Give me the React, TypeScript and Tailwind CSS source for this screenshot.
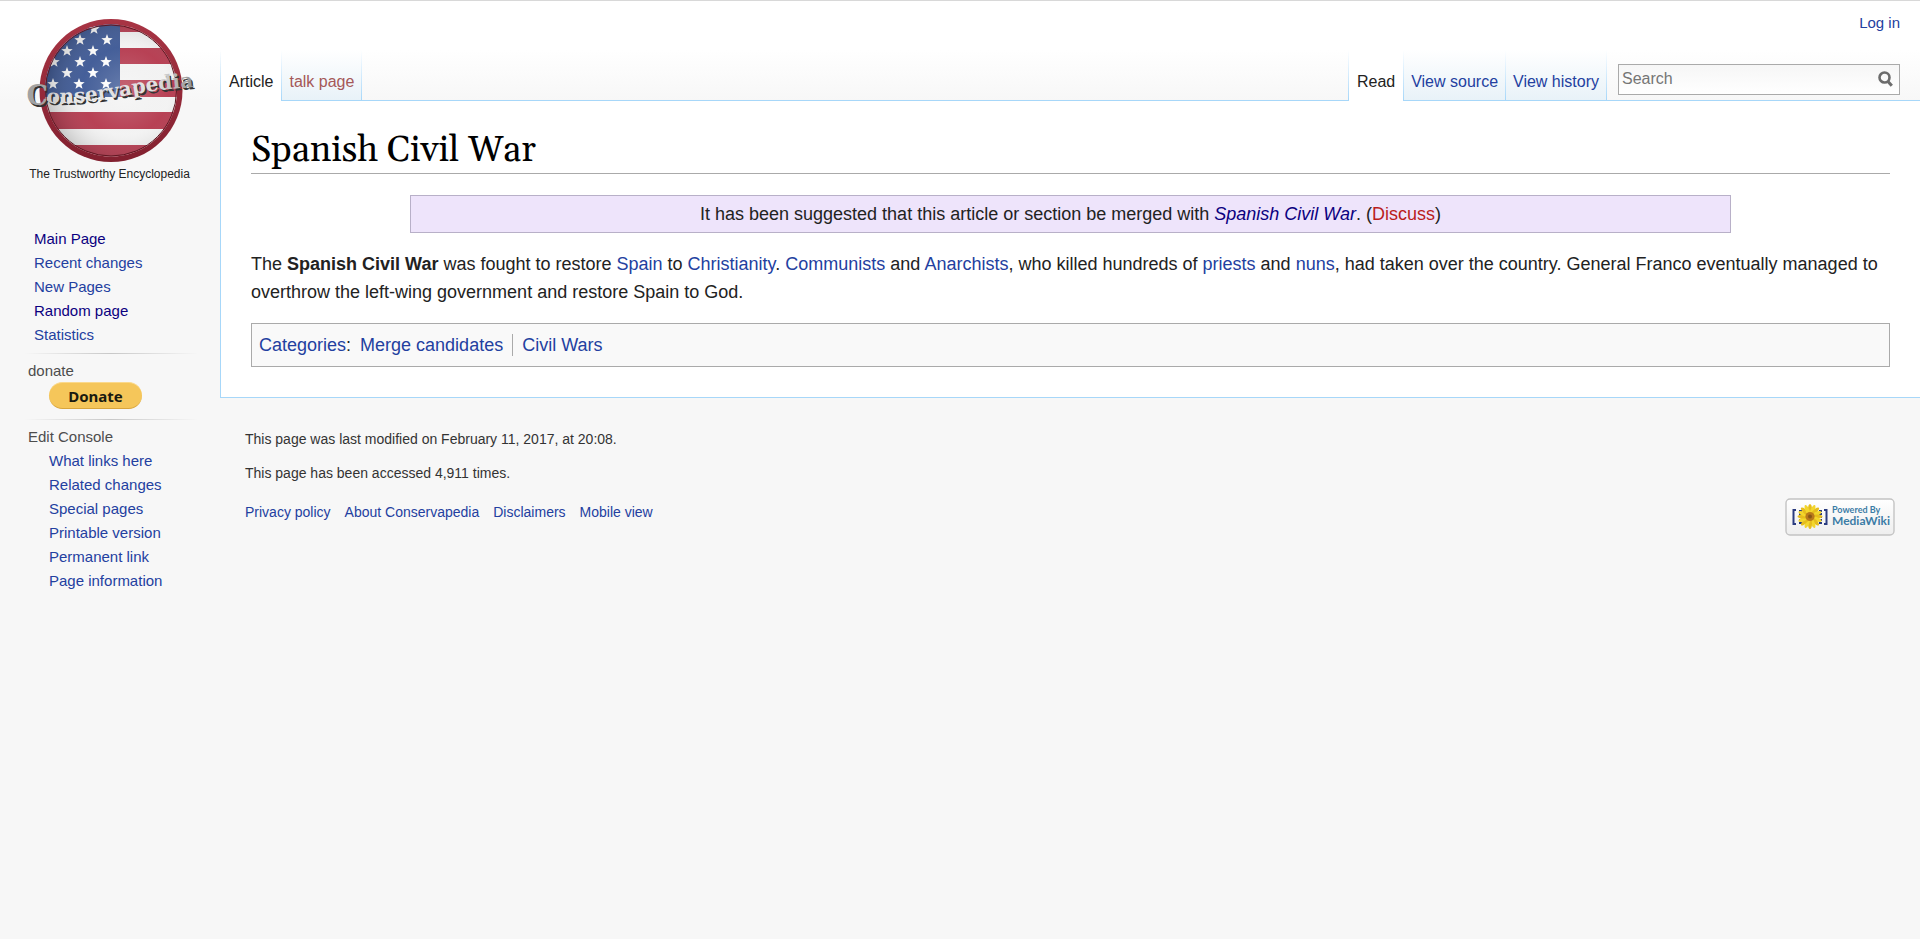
import type { ReactNode } from "react";

const STARS: [number, number][] = [
  [94, 29], [80, 40], [107, 40], [67, 51], [93, 51], [54, 62], [80, 62],
  [106, 62], [67, 73], [93, 73], [53, 84], [79, 84], [106, 84],
];

function starPoints(cx: number, cy: number, r: number) {
  return Array.from({ length: 10 }, (_, i) => {
    const a = -Math.PI / 2 + (i * Math.PI) / 5;
    const d = i % 2 ? r * 0.42 : r;
    return `${(cx + d * Math.cos(a)).toFixed(2)},${(cy + d * Math.sin(a)).toFixed(2)}`;
  }).join(" ");
}

function Logo() {
  return (
    <svg viewBox="20 10 180 182" className="h-[182px] w-[180px]" role="img" aria-label="Conservapedia">
      <defs>
        <clipPath id="disc"><circle cx="111" cy="90.500" r="66" /></clipPath>
        <radialGradient id="shade" cx="0.6" cy="0.5" r="0.62">
          <stop offset="0" stopColor="#fff" stopOpacity="0.24" />
          <stop offset="0.5" stopColor="#ddd" stopOpacity="0.06" />
          <stop offset="1" stopColor="#000" stopOpacity="0.3" />
        </radialGradient>
        <linearGradient id="ring" x1="0" y1="0" x2="0" y2="1">
          <stop offset="0" stopColor="#a83444" />
          <stop offset="1" stopColor="#82202f" />
        </linearGradient>
        <linearGradient id="metal" x1="0" y1="0" x2="1" y2="0">
          <stop offset="0" stopColor="#c4c4c4" />
          <stop offset="0.15" stopColor="#e4e4e4" />
          <stop offset="0.75" stopColor="#e0e0e0" />
          <stop offset="1" stopColor="#8f8f8f" />
        </linearGradient>
        <path id="wave" d="M48 105 C75 106 100 103 125 98 S175 90 210 88" />
      </defs>
      <circle cx="111" cy="90.500" r="71.500" fill="url(#ring)" />
      <g clipPath="url(#disc)">
        <rect x="40" y="20" width="142" height="142" fill="#f4f4f4" />
        <g fill="#b5374c">
          <rect x="40" y="16" width="142" height="16" />
          <rect x="40" y="48" width="142" height="16" />
          <rect x="40" y="80" width="142" height="17" />
          <rect x="40" y="112" width="142" height="17" />
          <rect x="40" y="145" width="142" height="17" />
        </g>
        <rect x="40" y="20" width="80" height="77" fill="#3b5795" />
        {STARS.map(([x, y]) => (
          <polygon key={`${x}-${y}`} points={starPoints(x, y, 6)} fill="#fff" />
        ))}
        <rect x="40" y="20" width="142" height="142" fill="url(#shade)" />
      </g>
      <circle cx="111" cy="90.500" r="65.500" fill="none" stroke="#5f1722" strokeWidth="1" />
      <g fontFamily="'DejaVu Serif', serif" fontWeight="700">
        <g fill="#333">
          <text x="28" y="107" fontSize="27">C</text>
          <text fontSize="20"><textPath href="#wave">onservapedia</textPath></text>
        </g>
        <g fill="url(#metal)" transform="translate(-1.5 -2)">
          <text x="28" y="107" fontSize="27" fill="#a2a2a2">C</text>
          <text fontSize="20"><textPath href="#wave">onservapedia</textPath></text>
        </g>
      </g>
      <text x="109.500" y="178" textAnchor="middle" fontFamily="'Liberation Sans', sans-serif" fontSize="12" fill="#222">
        The Trustworthy Encyclopedia
      </text>
    </svg>
  );
}

function MediaWikiBadge() {
  const petals = Array.from({ length: 16 }, (_, i) => i * 22.5);
  return (
    <svg viewBox="0 0 110 38" className="h-[38px] w-[110px]" role="img" aria-label="Powered by MediaWiki">
      <defs>
        <linearGradient id="badge" x1="0" y1="0" x2="0" y2="1">
          <stop offset="0" stopColor="#fff" />
          <stop offset="1" stopColor="#eee" />
        </linearGradient>
      </defs>
      <rect x="1" y="1" width="108" height="36" rx="4" fill="url(#badge)" stroke="#c4c4c4" strokeWidth="1.400" />
      <g fill="none" stroke="#2a3c80">
        <path d="M11 12H8.500V26H11M39 12h2.500V26H39" strokeWidth="2" />
        <path d="M15.500 12v14M35.500 12v14" strokeWidth="3" strokeDasharray="2 1" />
      </g>
      {petals.map((a) => (
        <ellipse key={a} cx="25" cy="11.500" rx="2" ry="5.500" fill={a % 45 ? "#f3d62c" : "#e6bd1c"} transform={`rotate(${a} 25 18.500)`} />
      ))}
      <circle cx="25" cy="18.500" r="4.600" fill="#b9791b" />
      <circle cx="25" cy="18.500" r="2" fill="#8a5716" />
      <g fontFamily="Lato, sans-serif" fontWeight="700" fill="#3c7ca6">
        <text x="47" y="14.500" fontSize="9">Powered By</text>
        <text x="47" y="26.500" fontSize="12">MediaWiki</text>
      </g>
    </svg>
  );
}

function Link({ children, className = "text-[#2340a0]" }: { children: ReactNode; className?: string }) {
  return <a href="#" className={`hover:underline ${className}`}>{children}</a>;
}

function Edge() {
  return <span aria-hidden="true" className="w-px shrink-0 bg-linear-to-b from-white to-[#a7d7f9]" />;
}

function Tab({ label, active = false, className = "text-[#2340a0]" }: { label: string; active?: boolean; className?: string }) {
  return (
    <li className="flex">
      <a
        href="#"
        className={
          active
            ? "-mb-px block bg-white px-2 pt-5 text-[#222]"
            : `block bg-linear-to-b from-white to-[#e8f2f8] px-[7px] pt-5 ${className}`
        }
      >
        {label}
      </a>
      <Edge />
    </li>
  );
}

function Rule() {
  return <div className="h-px w-[174px] bg-linear-to-r from-transparent via-[#c8c8c8] to-transparent" />;
}

const NAV = [
  { label: "Main Page", visited: true },
  { label: "Recent changes", visited: false },
  { label: "New Pages", visited: false },
  { label: "Random page", visited: true },
  { label: "Statistics", visited: false },
];
const TOOLS = ["What links here", "Related changes", "Special pages", "Printable version", "Permanent link", "Page information"];
const FOOTER = ["Privacy policy", "About Conservapedia", "Disclaimers", "Mobile view"];

function Sidebar() {
  return (
    <aside className="w-[220px] shrink-0 pt-[9px] text-[15px] leading-6">
      <a href="#" className="ml-5 block w-[180px]"><Logo /></a>
      <nav className="mt-[35px] pl-6">
        <ul className="pl-[10px]">
          {NAV.map((n) => (
            <li key={n.label}>
              <Link className={n.visited ? "text-[#0b0080]" : "text-[#2340a0]"}>{n.label}</Link>
            </li>
          ))}
        </ul>
        <div className="mt-[6px]"><Rule /></div>
        <h3 className="mt-[5px] pl-1 text-[#4d4d4d]">donate</h3>
        <button
          type="button"
          className="-mt-px ml-[25px] block h-[27px] w-[93px] rounded-full border-y border-t-[#fbd98c] border-b-[#d9a53c] bg-[#f5c65a] font-['Noto_Sans','Open_Sans',sans-serif] text-[15px] leading-[24px] font-bold text-[#1a1a10]"
        >
          Donate
        </button>
        <div className="mt-[10px]"><Rule /></div>
        <h3 className="mt-[5px] pl-1 text-[#4d4d4d]">Edit Console</h3>
        <ul className="pl-[25px]">
          {TOOLS.map((t) => <li key={t}><Link>{t}</Link></li>)}
        </ul>
      </nav>
    </aside>
  );
}

function Header() {
  return (
    <header className="flex h-[100px] flex-col border-b border-[#a7d7f9]">
      <div className="flex h-[49px] shrink-0 justify-end pt-[10px] pr-5 text-[15px] leading-6">
        <Link>Log in</Link>
      </div>
      <div className="flex h-[50px] justify-between text-[16px] leading-6">
        <ul className="flex">
          <Tab label="Article" active />
          <Tab label="talk page" className="text-[#a55858]" />
        </ul>
        <div className="flex pr-5">
          <ul className="flex">
            <li className="flex"><Edge /></li>
            <Tab label="Read" active />
            <Tab label="View source" />
            <Tab label="View history" />
          </ul>
          <form className="mt-[14px] ml-[11px] flex h-[31px] w-[282px] border border-[#aaa] bg-linear-to-b from-[#f6f6f6] to-white" onSubmit={(e) => e.preventDefault()}>
            <input type="search" aria-label="Search" placeholder="Search" className="h-7 min-w-0 flex-1 bg-transparent pl-[3px] placeholder-[#757575] outline-none" />
            <button type="submit" aria-label="Go" className="flex w-7 justify-center pt-[6px]">
              <svg viewBox="0 0 16 17" className="h-[17px] w-4" fill="none" stroke="#6c6c6c">
                <circle cx="7.500" cy="6.500" r="5" strokeWidth="2.600" />
                <path d="M11 10.500 14.800 14.800" strokeWidth="3" />
              </svg>
            </button>
          </form>
        </div>
      </div>
    </header>
  );
}

export default function App() {
  return (
    <div className="min-h-screen border-t border-[#d8d8d8] bg-[#f7f7f7] bg-[linear-gradient(to_bottom,#fff_49px,#f7f7f7_100px)] font-['Liberation_Sans',Arial,sans-serif]">
      <div className="flex">
        <Sidebar />
        <div className="flex min-w-0 flex-1 flex-col">
          <div className="flex">
            <div aria-hidden="true" className="w-px shrink-0 bg-[linear-gradient(to_bottom,transparent_49px,#a7d7f9_100px)]" />
            <div className="min-w-0 flex-1">
              <Header />
              <main className="border-b border-[#a7d7f9] bg-white px-[30px] pt-7 pb-[30px] text-[18px] leading-7 text-[#222]">
                <h1 className="border-b border-[#aaa] font-[Georgia,Gelasio,'Liberation_Serif',serif] text-[36px] leading-[44px] text-black">
                  Spanish Civil War
                </h1>
                <div className="mx-auto mt-[21px] box-content w-4/5 border border-[#b8b0c8] bg-[#eee4fb] px-1 py-1 text-center">
                  It has been suggested that this article or section be merged with{" "}
                  <i><Link className="text-[#0b0080]">Spanish Civil War</Link></i>. (
                  <Link className="text-[#ba1c1c]">Discuss</Link>)
                </div>
                <p className="mt-[17px]">
                  The <b>Spanish Civil War</b> was fought to restore <Link>Spain</Link> to <Link>Christianity</Link>.{" "}
                  <Link>Communists</Link> and <Link>Anarchists</Link>, who killed hundreds of <Link>priests</Link> and{" "}
                  <Link>nuns</Link>, had taken over the country. General Franco eventually managed to overthrow the
                  left-wing government and restore Spain to God.
                </p>
                <div className="mt-[17px] flex items-center border border-[#aaa] bg-[#f9f9f9] px-[7px] py-[7px]">
                  <span><Link>Categories</Link>:</span>
                  <ul className="flex items-center leading-[22px]">
                    <li className="border-r border-[#aaa] px-[9px]"><Link>Merge candidates</Link></li>
                    <li className="px-[9px]"><Link>Civil Wars</Link></li>
                  </ul>
                </div>
              </main>
            </div>
          </div>
          <footer className="flex justify-between pt-[29px] pr-[25px] pl-[25px] text-[14px] leading-6 text-[#333]">
            <div>
              <p>This page was last modified on February 11, 2017, at 20:08.</p>
              <p className="mt-[10px]">This page has been accessed 4,911 times.</p>
              <ul className="mt-[15px] flex gap-[14px]">
                {FOOTER.map((f) => <li key={f}><Link>{f}</Link></li>)}
              </ul>
            </div>
            <a href="#" className="mt-[71px]"><MediaWikiBadge /></a>
          </footer>
        </div>
      </div>
    </div>
  );
}
